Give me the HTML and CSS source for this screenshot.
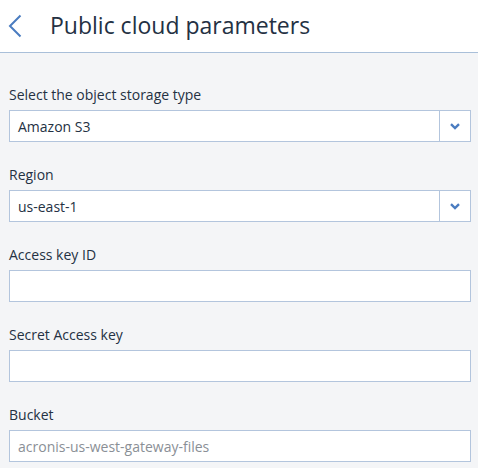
FILE: index.html
```html
<!DOCTYPE html>
<html>
<head>
<meta charset="utf-8">
<link rel="stylesheet" href="styles.css">
</head>
<body>
<header class="header">
  <svg class="back" width="14" height="24" viewBox="0 0 14 24"><path d="M12.5 1.5 L2 12 L12.5 22.5" fill="none" stroke="#4a7cc0" stroke-width="2"/></svg>
  <h1 class="title">Public cloud parameters</h1>
</header>
<main class="form">
  <div class="field">
    <label class="label">Select the object storage type</label>
    <div class="select">
      <span class="value">Amazon S3</span>
      <span class="arrow"><svg width="10" height="7" viewBox="0 0 10 7"><path d="M1 1.2 L5 5 L9 1.2" fill="none" stroke="#4a7cc0" stroke-width="2.4"/></svg></span>
    </div>
  </div>
  <div class="field">
    <label class="label">Region</label>
    <div class="select">
      <span class="value">us-east-1</span>
      <span class="arrow"><svg width="10" height="7" viewBox="0 0 10 7"><path d="M1 1.2 L5 5 L9 1.2" fill="none" stroke="#4a7cc0" stroke-width="2.4"/></svg></span>
    </div>
  </div>
  <div class="field">
    <label class="label">Access key ID</label>
    <div class="input"></div>
  </div>
  <div class="field">
    <label class="label">Secret Access key</label>
    <div class="input"></div>
  </div>
  <div class="field">
    <label class="label">Bucket</label>
    <div class="input"><span class="placeholder">acronis-us-west-gateway-files</span></div>
  </div>
</main>
</body>
</html>
```
FILE: styles.css
```css
html, body {
  margin: 0;
  padding: 0;
  background: #f4f5f7;
  font-family: "Open Sans", "Noto Sans", sans-serif;
  color: #243143;
}
.header {
  height: 52px;
  background: #ffffff;
  border-bottom: 1px solid #a9bfd9;
  display: flex;
  align-items: center;
}
.back {
  margin-left: 8px;
  margin-top: -1px;
  flex: none;
}
.title {
  margin: -2px 0 0 28px;
  font-size: 23px;
  font-weight: 500;
  line-height: 32px;
  color: #243143;
}
.form {
  padding: 32px 7px 0 9px;
  display: flex;
  flex-direction: column;
  gap: 23px;
}
.field {
  display: flex;
  flex-direction: column;
  gap: 6px;
}
.label {
  font-size: 14px;
  line-height: 19px;
  color: #243143;
}
.select, .input {
  height: 32px;
  box-sizing: border-box;
  border: 1px solid #b3c5dd;
  background: #ffffff;
  display: flex;
  align-items: center;
}
.value, .placeholder {
  flex: 1;
  padding-left: 8px;
  font-size: 14px;
  line-height: 19px;
  color: #243143;
}
.placeholder {
  color: #8a8f96;
}
.arrow {
  width: 30px;
  height: 100%;
  border-left: 1px solid #b3c5dd;
  display: flex;
  align-items: center;
  justify-content: center;
}
```
